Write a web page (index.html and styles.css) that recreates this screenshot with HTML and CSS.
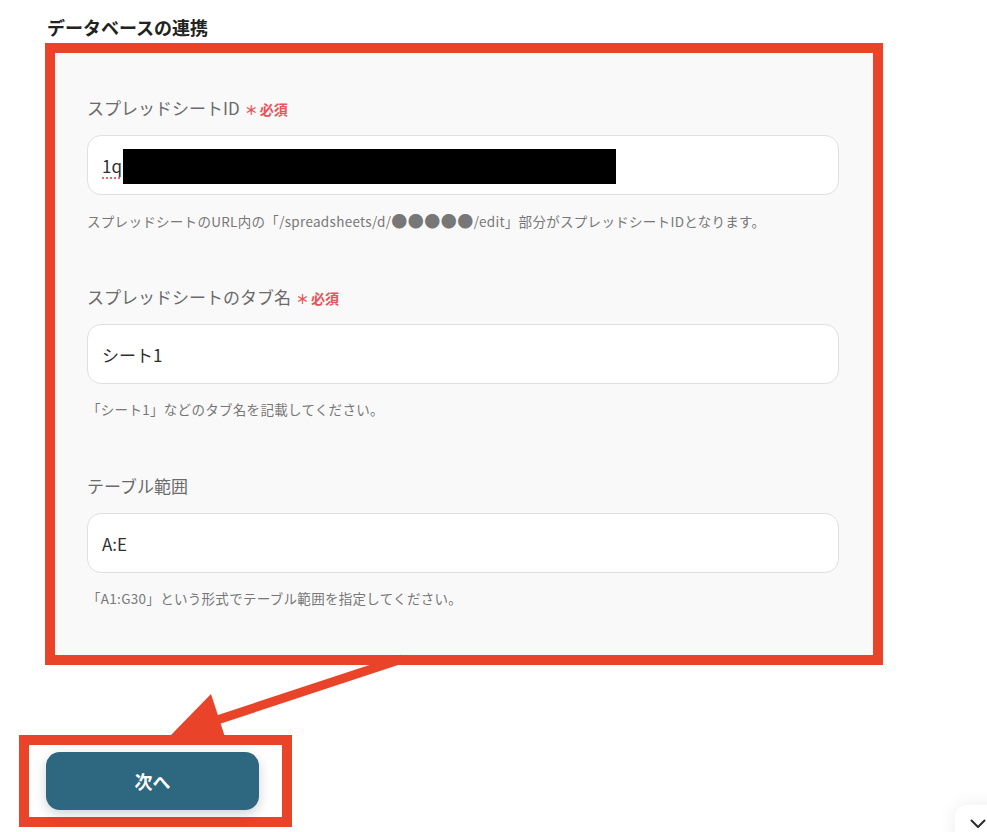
FILE: index.html
```html
<!DOCTYPE html>
<html lang="ja">
<head>
<meta charset="utf-8">
<title>データベースの連携</title>
<link rel="stylesheet" href="styles.css">
</head>
<body>
<div class="page">
  <h2 class="title">データベースの連携</h2>
  <div class="frame">
    <div class="panel">
      <div class="field">
        <div class="label">スプレッドシートID<span class="req"><span class="ast">＊</span>必須</span></div>
        <div class="input"><span class="spell">1q</span><span class="redact"></span></div>
        <div class="help">スプレッドシートのURL内の「/spreadsheets/d/<span class="dots">●●●●●</span>/edit」部分がスプレッドシートIDとなります。</div>
      </div>
      <div class="field">
        <div class="label">スプレッドシートのタブ名<span class="req"><span class="ast">＊</span>必須</span></div>
        <div class="input">シート1</div>
        <div class="help">「シート1」などのタブ名を記載してください。</div>
      </div>
      <div class="field">
        <div class="label">テーブル範囲</div>
        <div class="input">A:E</div>
        <div class="help">「A1:G30」という形式でテーブル範囲を指定してください。</div>
      </div>
    </div>
  </div>
  <div class="btn-frame">
    <button class="next">次へ</button>
  </div>
</div>
<svg class="arrow" width="987" height="832" viewBox="0 0 987 832">
  <line x1="402" y1="659" x2="205" y2="724" stroke="#e9432a" stroke-width="9"/>
  <polygon points="171,735 211,694 225,737" fill="#e9432a"/>
</svg>
<div class="fab">
  <svg width="16" height="10" viewBox="0 0 16 10"><path d="M1.5 1.5 L8 8 L14.5 1.5" fill="none" stroke="#2b2b2b" stroke-width="2" stroke-linecap="round" stroke-linejoin="round"/></svg>
</div>
</body>
</html>
```
FILE: styles.css
```css
* { box-sizing: border-box; }
html, body { margin: 0; padding: 0; background: #ffffff; }
body {
  width: 987px;
  height: 832px;
  overflow: hidden;
  position: relative;
  font-family: "Noto Sans CJK JP", "Noto Sans", sans-serif;
  color: #333;
}
.page { padding: 14px 0 0 45px; }
.title {
  margin: 0 0 3px 2px;
  font-size: 18px;
  line-height: 26px;
  font-weight: 700;
  color: #222;
}
.frame {
  width: 838px;
  border: 10px solid #e9432a;
}
.panel {
  background: #f9f9f9;
  height: 602px;
  padding: 43px 34px 0 32px;
}
.field { margin-bottom: 56px; }
.field:last-child { margin-bottom: 0; }
.label {
  height: 24px;
  font-size: 17px;
  line-height: 24px;
  color: #6a6a6a;
  display: flex;
  align-items: baseline;
}
.req {
  margin-left: 5px;
  font-size: 14px;
  line-height: 24px;
  font-weight: 700;
  color: #e8535a;
}
.ast { font-size: 13px; margin-right: 2px; }
.input {
  position: relative;
  margin-top: 15px;
  height: 60px;
  background: #fff;
  border: 1px solid #e0e0e0;
  border-radius: 14px;
  padding: 0 14px;
  display: flex;
  align-items: center;
  font-size: 17px;
  color: #2f2f2f;
}
.spell {
  text-decoration: underline dotted #e36a6a;
  text-decoration-thickness: 2px;
  text-underline-offset: 5px;
}
.redact {
  position: absolute;
  left: 35px;
  top: 13px;
  width: 493px;
  height: 35px;
  background: #000;
}
.help {
  margin-top: 16px;
  height: 18px;
  font-size: 13.5px;
  line-height: 18px;
  letter-spacing: 0.3px;
  color: #777;
  white-space: nowrap;
}
.dots {
  font-size: 16px;
  letter-spacing: 0.5px;
}
.btn-frame {
  margin: 70px 0 0 -26px;
  width: 273px;
  height: 92px;
  border: 10px solid #e9432a;
  background: #fff;
  padding: 7px 0 0 17px;
}
.next {
  width: 213px;
  height: 58px;
  border: none;
  border-radius: 14px;
  background: #2e6780;
  color: #fff;
  font-family: "Noto Sans CJK JP", sans-serif;
  font-size: 18px;
  font-weight: 700;
  box-shadow: 0 4px 12px rgba(30, 50, 70, 0.22);
}
.arrow {
  position: absolute;
  left: 0;
  top: 0;
  pointer-events: none;
}
.fab {
  position: absolute;
  left: 955px;
  top: 805px;
  width: 52px;
  height: 52px;
  background: #fff;
  border-radius: 12px;
  box-shadow: 0 0 18px rgba(0, 0, 0, 0.08);
  display: flex;
  justify-content: center;
  padding-top: 14px;
  padding-right: 6px;
}
```
